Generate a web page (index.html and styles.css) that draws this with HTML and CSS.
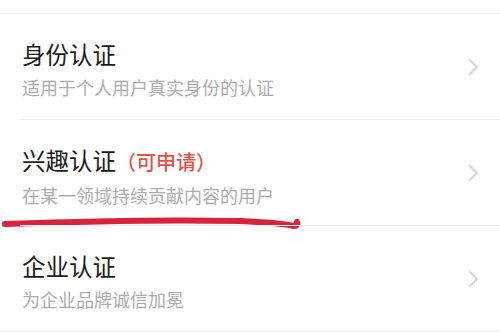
FILE: index.html
```html
<!DOCTYPE html>
<html lang="zh-CN">
<head>
    <meta charset="UTF-8">
    <meta name="viewport" content="width=device-width, initial-scale=1.0">
    <title>认证类型</title>
    <link rel="stylesheet" href="styles.css">
</head>
<body>
    <div class="cert-list">
        <div class="cert-item">
            <div class="cert-text">
                <div class="cert-title">身份认证</div>
                <div class="cert-desc">适用于个人用户真实身份的认证</div>
            </div>
            <span class="arrow"></span>
        </div>

        <div class="cert-item marked">
            <div class="cert-text">
                <div class="cert-title">兴趣认证<span class="tag">（可申请）</span></div>
                <div class="cert-desc">在某一领域持续贡献内容的用户</div>
            </div>
            <span class="arrow"></span>
            <svg class="scribble" width="302" height="16" viewBox="0 0 302 16">
                <path d="M5 9 C 60 7, 150 4, 240 6 C 265 7, 285 9, 294 11 C 297 11, 298 9, 297 7" fill="none" stroke="#d7243c" stroke-width="6" stroke-linecap="round"/>
            </svg>
        </div>

        <div class="cert-item">
            <div class="cert-text">
                <div class="cert-title">企业认证</div>
                <div class="cert-desc">为企业品牌诚信加冕</div>
            </div>
            <span class="arrow"></span>
        </div>
    </div>
</body>
</html>
```

FILE: styles.css
```css
body {
    margin: 0;
    background-color: #fff;
    font-family: 'Noto Sans CJK SC', 'Noto Sans', sans-serif;
}

.cert-list {
    margin-top: 13px;
    border-top: 1px solid #efefef;
    border-bottom: 1px solid #efefef;
}

.cert-item {
    position: relative;
    display: flex;
    align-items: center;
    height: 105px;
    padding: 0 20px 0 22px;
}

.cert-item + .cert-item::before {
    content: '';
    position: absolute;
    left: 20px;
    right: 0;
    top: -1px;
    border-top: 1px solid #efefef;
}

.cert-item + .cert-item {
    margin-top: 1px;
}

.cert-text {
    flex: 1;
    align-self: flex-start;
    padding-top: 25px;
}

.cert-title {
    font-size: 23.5px;
    line-height: 30px;
    color: #1c1c1c;
}

.cert-title .tag {
    font-size: 20px;
    font-weight: 500;
    color: #e0524c;
}

.cert-desc {
    margin-top: 6px;
    font-size: 18px;
    line-height: 24px;
    color: #adadad;
}

.arrow {
    width: 10px;
    height: 10px;
    margin-right: 4px;
    border-top: 2px solid #d6d6d6;
    border-right: 2px solid #d6d6d6;
    transform: rotate(45deg);
}

.scribble {
    position: absolute;
    left: 0;
    bottom: -6px;
}
```
